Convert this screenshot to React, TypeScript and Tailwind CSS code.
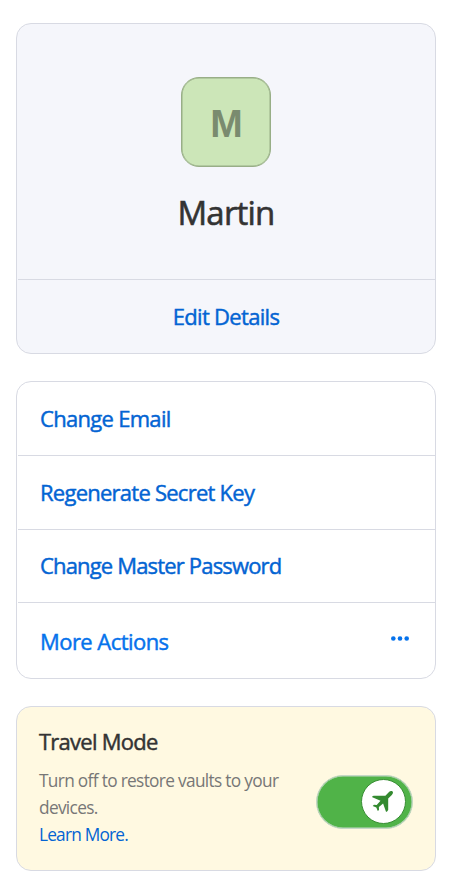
import type { ReactNode } from "react";

function Card({ className, children }: { className: string; children: ReactNode }) {
  return (
    <section className={`flex flex-col rounded-[15px] border border-[#d8dae3] ${className}`}>
      {children}
    </section>
  );
}

function Divider() {
  return <div className="ml-px h-px shrink-0 bg-[#d8dae3]" />;
}

function Plane() {
  return (
    <svg width="21" height="21" viewBox="0 0 21 21" className="mr-[2px] fill-[#348a30]">
      <path d="M20.6.4c.8.8.3 2.4-.8 3.5L16.2 7.5V19l-1.3 1.7H14l-2.9-8.3-4.2 3.7.1 2.8-1.2 1.2-1.5-3.5-3.6-1.6 1.3-1.2 2.7.1 3.8-4.2L.3 6.2v-.9L1.7 4.7h11.7L17 1.1C18.1 0 19.8-.4 20.6.4z" />
    </svg>
  );
}

export default function App() {
  return (
    <main className="flex h-[885px] w-[451px] flex-col gap-[27px] bg-white pt-[23px] pl-4 font-['Open_Sans','Noto_Sans',sans-serif] whitespace-nowrap">
      <Card className="h-[331px] w-[420px] bg-[#f5f6fb]">
        <div className="flex h-[255px] flex-col items-center pt-[53px]">
          <div className="flex size-[90px] items-center justify-center rounded-[18px] border border-[#98ae87] bg-[#cce6b8] pt-1 pl-px font-['Liberation_Sans',Arial,sans-serif] text-[39px] font-bold text-[#7a8b6f] shadow-[inset_0_0_0_0.5px_#98ae87]">
            M
          </div>
          <h1 className="mt-[21px] text-[33px] leading-[50px] font-medium tracking-[-0.8px] text-[#333] [-webkit-text-stroke:0.6px_#333]">Martin</h1>
        </div>
        <Divider />
        <a className="flex flex-1 items-center justify-center text-[22px] font-medium tracking-[-0.7px] text-[#0364d3] [-webkit-text-stroke:0.45px]">
          Edit Details
        </a>
      </Card>

      <Card className="h-[298px] w-[420px] bg-white text-[22px] font-medium tracking-[-0.75px] text-[#0364d3] [-webkit-text-stroke:0.45px]">
        <a className="flex h-[73px] items-center pl-[23px] tracking-[-0.7px]">Change Email</a>
        <Divider />
        <a className="flex h-[73px] items-center pl-[23px]">Regenerate Secret Key</a>
        <Divider />
        <a className="flex h-[72px] items-center pb-px pl-[23px] tracking-[-0.83px]">Change Master Password</a>
        <Divider />
        <button className="flex h-[75px] items-center justify-between pt-0.5 pr-[25px] pl-[23px] tracking-[-0.55px] text-[#0572ec]">
          More Actions
          <svg width="19" height="5" viewBox="0 0 19 5" fill="currentColor" className="mb-[6px]">
            <circle cx="2.3" cy="2.5" r="2.3" />
            <circle cx="9" cy="2.5" r="2.3" />
            <circle cx="15.7" cy="2.5" r="2.3" />
          </svg>
        </button>
      </Card>

      <Card className="h-[165px] w-[420px] bg-[#fff9e1]">
        <div className="flex justify-between pt-5 pr-[22px] pl-[22px]">
          <div>
            <h2 className="-mt-px text-[22px] leading-[30px] font-medium tracking-[-0.75px] text-[#333] [-webkit-text-stroke:0.45px]">Travel Mode</h2>
            <p className="mt-[11px] text-[17.3px] leading-[27px] font-normal tracking-[-0.68px] text-[#777]">
              Turn off to restore vaults to your
              <br />
              devices.
              <br />
              <a className="tracking-[-0.8px] text-[#0364d3]">Learn More.</a>
            </p>
          </div>
          <button className="mt-[48px] flex h-[54px] w-[97px] shrink-0 items-center justify-end rounded-full border border-[#c5d8c7] bg-[#50b348] pr-[6px] shadow-[inset_0_0_0_0.5px_#c5d8c7]">
            <span className="mb-px flex size-[45px] items-center justify-center rounded-full border border-[#398e35] bg-white">
              <Plane />
            </span>
          </button>
        </div>
      </Card>
    </main>
  );
}
